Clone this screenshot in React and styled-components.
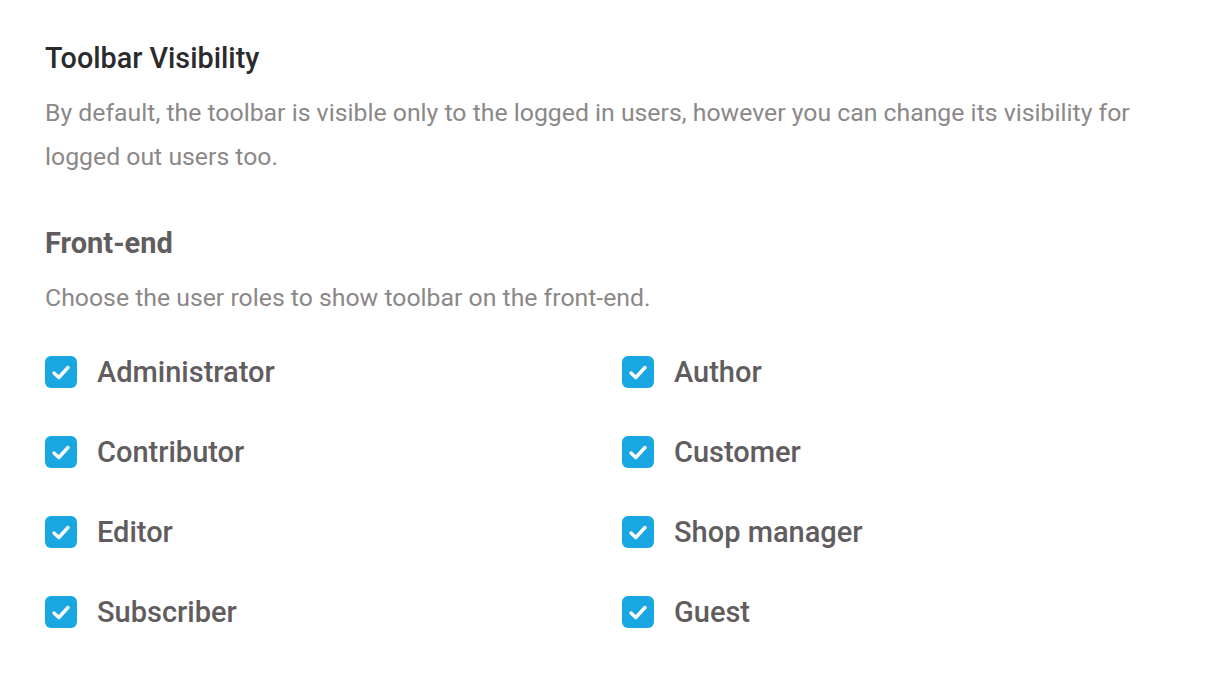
import React from "react";
import styled, { createGlobalStyle } from "styled-components";

const Global = createGlobalStyle`
  html, body { margin: 0; padding: 0; background: #fff; }
  body { font-family: Roboto, "Noto Sans", sans-serif; -webkit-font-smoothing: antialiased; }
`;

const Page = styled.div`
  padding: 40px 45px 30px 45px;
`;

const Title = styled.h2`
  margin: 0;
  font-size: 28.75px;
  line-height: 36px;
  font-weight: 500;
  color: #2b2a2c;
`;

const Desc = styled.p`
  margin: ${(p) => p.$mt || "15px"} 0 0;
  font-size: 24.8px;
  line-height: 44px;
  font-weight: 400;
  color: #8b8888;
  max-width: 1110px;
`;

const Subtitle = styled.h3`
  margin: 46px 0 0;
  font-size: 29px;
  line-height: 36px;
  font-weight: 700;
  color: #615d5e;
`;

const Grid = styled.div`
  display: grid;
  grid-template-columns: 577px 1fr;
  row-gap: 48px;
  margin-top: 36px;
`;

const Item = styled.label`
  display: flex;
  align-items: center;
  gap: 20px;
  height: 32px;
`;

const Box = styled.span`
  width: 32px;
  height: 32px;
  border-radius: 6px;
  background: #19a7e2;
  display: flex;
  flex-shrink: 0;
`;

const Label = styled.span`
  font-size: 29px;
  font-weight: 500;
  color: #615d5e;
  line-height: 32px;
`;

const Check = () => (
  <svg width="32" height="32" viewBox="0 0 32 32" fill="none">
    <path d="M9 17 L13.8 21.5 L23 11.5" stroke="#fff" strokeWidth="3.4" strokeLinecap="round" strokeLinejoin="round" />
  </svg>
);

const roles = [
  "Administrator", "Author",
  "Contributor", "Customer",
  "Editor", "Shop manager",
  "Subscriber", "Guest",
];

export default function App() {
  return (
    <Page>
      <Global />
      <Title>Toolbar Visibility</Title>
      <Desc>
        By default, the toolbar is visible only to the logged in users, however you can change its visibility for logged out users too.
      </Desc>
      <Subtitle>Front-end</Subtitle>
      <Desc>Choose the user roles to show toolbar on the front-end.</Desc>
      <Grid>
        {roles.map((r) => (
          <Item key={r}>
            <Box><Check /></Box>
            <Label>{r}</Label>
          </Item>
        ))}
      </Grid>
    </Page>
  );
}
